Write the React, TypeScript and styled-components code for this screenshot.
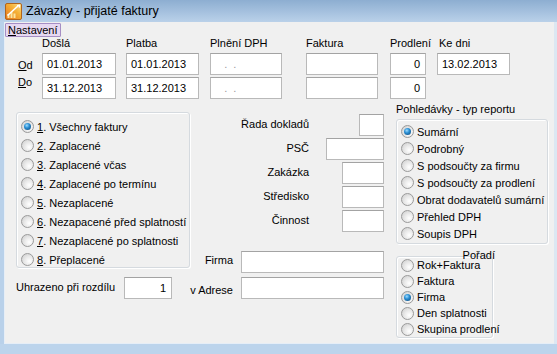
import React from 'react'
import styled, { createGlobalStyle } from 'styled-components'

const GlobalStyle = createGlobalStyle`
  html, body {
    margin: 0;
    padding: 0;
    background: #f0f0f0;
  }
  body {
    font-family: "Liberation Sans", Arial, sans-serif;
    font-size: 11px;
    color: #000;
  }
`

const Window = styled.div`
  width: 557px;
  height: 354px;
  display: flex;
  flex-direction: column;
  background: #bcd4ec;
  overflow: hidden;
`

const TitleBar = styled.div`
  height: 22px;
  flex: none;
  display: flex;
  align-items: center;
  gap: 4px;
  padding-left: 5px;
  background: linear-gradient(#8daed1, #a8c3e0 60%, #bad1e9);
  font-size: 12.5px;
  color: #000;
`

const Frame = styled.div`
  flex: 1;
  display: flex;
  min-height: 0;
`

const SideEdge = styled.div<{ w: number; tone: string }>`
  width: ${({ w }) => w}px;
  flex: none;
  background: ${({ tone }) => tone};
`

const Client = styled.div`
  flex: 1;
  background: #f0f0f0;
  border-left: 1px solid #e6eef7;
  border-bottom: 1px solid #e6eef7;
  display: flex;
  flex-direction: column;
`

const BottomEdge = styled.div`
  height: 10px;
  flex: none;
  background: #bcd4ec;
`

const MenuRow = styled.div`
  height: 14px;
  padding-top: 1px;
  display: flex;
`

const MenuItem = styled.div`
  height: 12px;
  line-height: 12px;
  padding: 0 2px;
  background: #e6d8f1;
  border: 1px solid #a58ec4;
  border-radius: 1px;
  font-size: 11px;
`

const DateSection = styled.div`
  display: flex;
  padding-left: 11px;
`

const DateCol = styled.div<{ w: number; ml: number }>`
  width: ${({ w }) => w}px;
  margin-left: ${({ ml }) => ml}px;
  display: flex;
  flex-direction: column;
  gap: 2px;
`

const ColLabel = styled.div<{ indent?: number }>`
  height: 14px;
  line-height: 13px;
  padding-left: ${({ indent }) => indent ?? 0}px;
  white-space: nowrap;
`

const RangeLabels = styled.div`
  width: 24px;
  padding-top: 20px;
  padding-left: 2px;
  line-height: 17px;
`

const Field = styled.div<{ w?: number; align?: 'left' | 'right'; muted?: boolean }>`
  box-sizing: border-box;
  width: ${({ w }) => (w ? `${w}px` : '100%')};
  height: 22px;
  line-height: 20px;
  background: #fff;
  border: 1px solid #b9b9b9;
  border-top-color: #a3a3a3;
  padding: 0 5px 0 4px;
  text-align: ${({ align }) => align || 'left'};
  color: ${({ muted }) => (muted ? '#9a9a9a' : '#000')};
  white-space: nowrap;
  overflow: hidden;
`

const Main = styled.div`
  display: flex;
  padding-top: 1px;
`

const LeftCol = styled.div`
  margin-left: 11px;
  width: 174px;
  display: flex;
  flex-direction: column;
`

const GroupBox = styled.div<{ w?: number; pt?: number }>`
  position: relative;
  box-sizing: border-box;
  width: ${({ w }) => (w ? `${w}px` : '100%')};
  border: 1px solid #d5dadf;
  border-radius: 3px;
  box-shadow: inset 1px 1px 0 #fff, 1px 1px 0 #fff;
  padding: ${({ pt }) => pt ?? 4}px 0 0 4px;
`

const RadioRow = styled.div<{ h: number }>`
  height: ${({ h }) => h}px;
  display: flex;
  align-items: center;
  gap: 3px;
  white-space: nowrap;
`

const RadioDot = styled.span<{ checked?: boolean }>`
  box-sizing: border-box;
  width: 13px;
  height: 13px;
  flex: none;
  border-radius: 50%;
  border: 1px solid #9a9a9a;
  background: radial-gradient(circle at 65% 65%, #ffffff 0%, #e9e9e9 45%, #c9c9c9 100%);
  display: flex;
  align-items: center;
  justify-content: center;

  &::after {
    content: '';
    display: ${({ checked }) => (checked ? 'block' : 'none')};
    width: 7px;
    height: 7px;
    border-radius: 50%;
    background: radial-gradient(circle at 40% 35%, #9fdcff 0%, #2a8fd4 40%, #0d3f6e 100%);
  }
`

const PayRow = styled.div`
  margin-top: 9px;
  display: flex;
  align-items: center;
  height: 22px;
`

const PayLabel = styled.div`
  width: 108px;
  padding-bottom: 2px;
`

const MiddleCol = styled.div`
  width: 194px;
  padding-top: 14px;
  display: flex;
  flex-direction: column;
`

const FilterRow = styled.div<{ lw: number; gap?: number }>`
  display: grid;
  grid-template-columns: ${({ lw }) => lw}px 1fr;
  align-items: center;
  height: 22px;
  margin-bottom: ${({ gap }) => gap ?? 2}px;
`

const FilterLabel = styled.div<{ dy?: number }>`
  text-align: right;
  white-space: nowrap;
  position: relative;
  top: ${({ dy }) => dy ?? 0}px;
`

const FieldSlot = styled.div`
  display: flex;
  justify-content: flex-end;
`

const Spacer = styled.div<{ h: number }>`
  height: ${({ h }) => h}px;
`

const RightCol = styled.div`
  margin-left: 12px;
  padding-top: 2px;
  width: 152px;
  display: flex;
  flex-direction: column;
`

const Caption = styled.div`
  height: 14px;
  line-height: 14px;
  margin-bottom: 3px;
`

const OrderTitle = styled.div`
  position: absolute;
  right: -3px;
  top: -8px;
  line-height: 13px;
`

const TitleIcon = () => (
  <svg width="17" height="17" viewBox="0 0 17 17">
    <defs>
      <linearGradient id="ig" x1="0" y1="1" x2="1" y2="0">
        <stop offset="0" stopColor="#e8731a" />
        <stop offset="0.6" stopColor="#f5b238" />
        <stop offset="1" stopColor="#fbe49a" />
      </linearGradient>
    </defs>
    <rect x="0.5" y="0.5" width="16" height="16" rx="1.5" fill="url(#ig)" stroke="#b0651d" />
    <rect x="2.5" y="11" width="2" height="4" fill="#fbe6a0" />
    <rect x="5.5" y="9" width="2" height="6" fill="#fbe6a0" />
    <rect x="8.5" y="10.5" width="2" height="4.5" fill="#fbe6a0" />
    <path d="M2.5 12.5 L13.5 2.5" stroke="#ffffff" strokeWidth="1.6" />
    <path d="M12 2.5 L14.5 2.2 L14.3 4.6" stroke="#ffffff" strokeWidth="1.2" fill="none" />
  </svg>
)

const reportTypes = ['Sumární', 'Podrobný', 'S podsoučty za firmu', 'S podsoučty za prodlení', 'Obrat dodavatelů sumární', 'Přehled DPH', 'Soupis DPH']
const orderTypes = ['Rok+Faktura', 'Faktura', 'Firma', 'Den splatnosti', 'Skupina prodlení']
const invoiceStates = [
  ['1', 'Všechny faktury'],
  ['2', 'Zaplacené'],
  ['3', 'Zaplacené včas'],
  ['4', 'Zaplacené po termínu'],
  ['5', 'Nezaplacené'],
  ['6', 'Nezapacené před splatností'],
  ['7', 'Nezaplacené po splatnosti'],
  ['8', 'Přeplacené'],
]

const filters: { label: string; w: number }[] = [
  { label: 'Řada dokladů', w: 25 },
  { label: 'PSČ', w: 58 },
  { label: 'Zakázka', w: 42 },
  { label: 'Středisko', w: 42 },
  { label: 'Činnost', w: 42 },
]

export default function App() {
  return (
    <Window>
      <GlobalStyle />
      <TitleBar>
        <TitleIcon />
        <span>Závazky - přijaté faktury</span>
      </TitleBar>
      <Frame>
        <SideEdge w={4} tone="#b9d1ea" />
        <Client>
          <MenuRow>
            <MenuItem><u>N</u>astavení</MenuItem>
          </MenuRow>

          <DateSection>
            <RangeLabels>
              <div><u>O</u>d</div>
              <div><u>D</u>o</div>
            </RangeLabels>
            <DateCol w={74} ml={0}>
              <ColLabel>Došlá</ColLabel>
              <Field>01.01.2013</Field>
              <Field>31.12.2013</Field>
            </DateCol>
            <DateCol w={73} ml={10}>
              <ColLabel>Platba</ColLabel>
              <Field>01.01.2013</Field>
              <Field>31.12.2013</Field>
            </DateCol>
            <DateCol w={72} ml={11}>
              <ColLabel>Plnění DPH</ColLabel>
              <Field muted>&nbsp;&nbsp;&nbsp;.&nbsp;&nbsp;.</Field>
              <Field muted>&nbsp;&nbsp;&nbsp;.&nbsp;&nbsp;.</Field>
            </DateCol>
            <DateCol w={72} ml={24}>
              <ColLabel>Faktura</ColLabel>
              <Field />
              <Field />
            </DateCol>
            <DateCol w={36} ml={12}>
              <ColLabel>Prodlení</ColLabel>
              <Field align="right">0</Field>
              <Field align="right">0</Field>
            </DateCol>
            <DateCol w={73} ml={11}>
              <ColLabel indent={2}>Ke dni</ColLabel>
              <Field>13.02.2013</Field>
            </DateCol>
          </DateSection>

          <Main>
            <LeftCol>
              <Spacer h={12} />
              <GroupBox style={{ height: 156 }}>
                {invoiceStates.map(([n, text], i) => (
                  <RadioRow key={n} h={19}>
                    <RadioDot checked={i === 0} />
                    <span><u>{n}</u>. {text}</span>
                  </RadioRow>
                ))}
              </GroupBox>
              <PayRow>
                <PayLabel>Uhrazeno při rozdílu</PayLabel>
                <Field w={48} align="right">1</Field>
              </PayRow>
            </LeftCol>

            <MiddleCol>
              {filters.map(f => (
                <FilterRow key={f.label} lw={119}>
                  <FilterLabel dy={-1}>{f.label}</FilterLabel>
                  <FieldSlot><Field w={f.w} /></FieldSlot>
                </FilterRow>
              ))}
              <Spacer h={17} />
              <FilterRow lw={43} gap={4}>
                <FilterLabel dy={-2}>Firma</FilterLabel>
                <FieldSlot><Field w={143} /></FieldSlot>
              </FilterRow>
              <FilterRow lw={43}>
                <FilterLabel dy={2}>v Adrese</FilterLabel>
                <FieldSlot><Field w={143} /></FieldSlot>
              </FilterRow>
            </MiddleCol>

            <RightCol>
              <Caption>Pohledávky - typ reportu</Caption>
              <GroupBox pt={3} style={{ height: 125 }}>
                {reportTypes.map((t, i) => (
                  <RadioRow key={t} h={17}>
                    <RadioDot checked={i === 0} />
                    <span>{t}</span>
                  </RadioRow>
                ))}
              </GroupBox>
              <Spacer h={12} />
              <GroupBox w={97} pt={0} style={{ height: 82 }}>
                <OrderTitle>Pořadí</OrderTitle>
                {orderTypes.map((t, i) => (
                  <RadioRow key={t} h={16}>
                    <RadioDot checked={i === 2} />
                    <span>{t}</span>
                  </RadioRow>
                ))}
              </GroupBox>
            </RightCol>
          </Main>
        </Client>
        <SideEdge w={3} tone="#dce7f2" />
      </Frame>
      <BottomEdge />
    </Window>
  )
}
